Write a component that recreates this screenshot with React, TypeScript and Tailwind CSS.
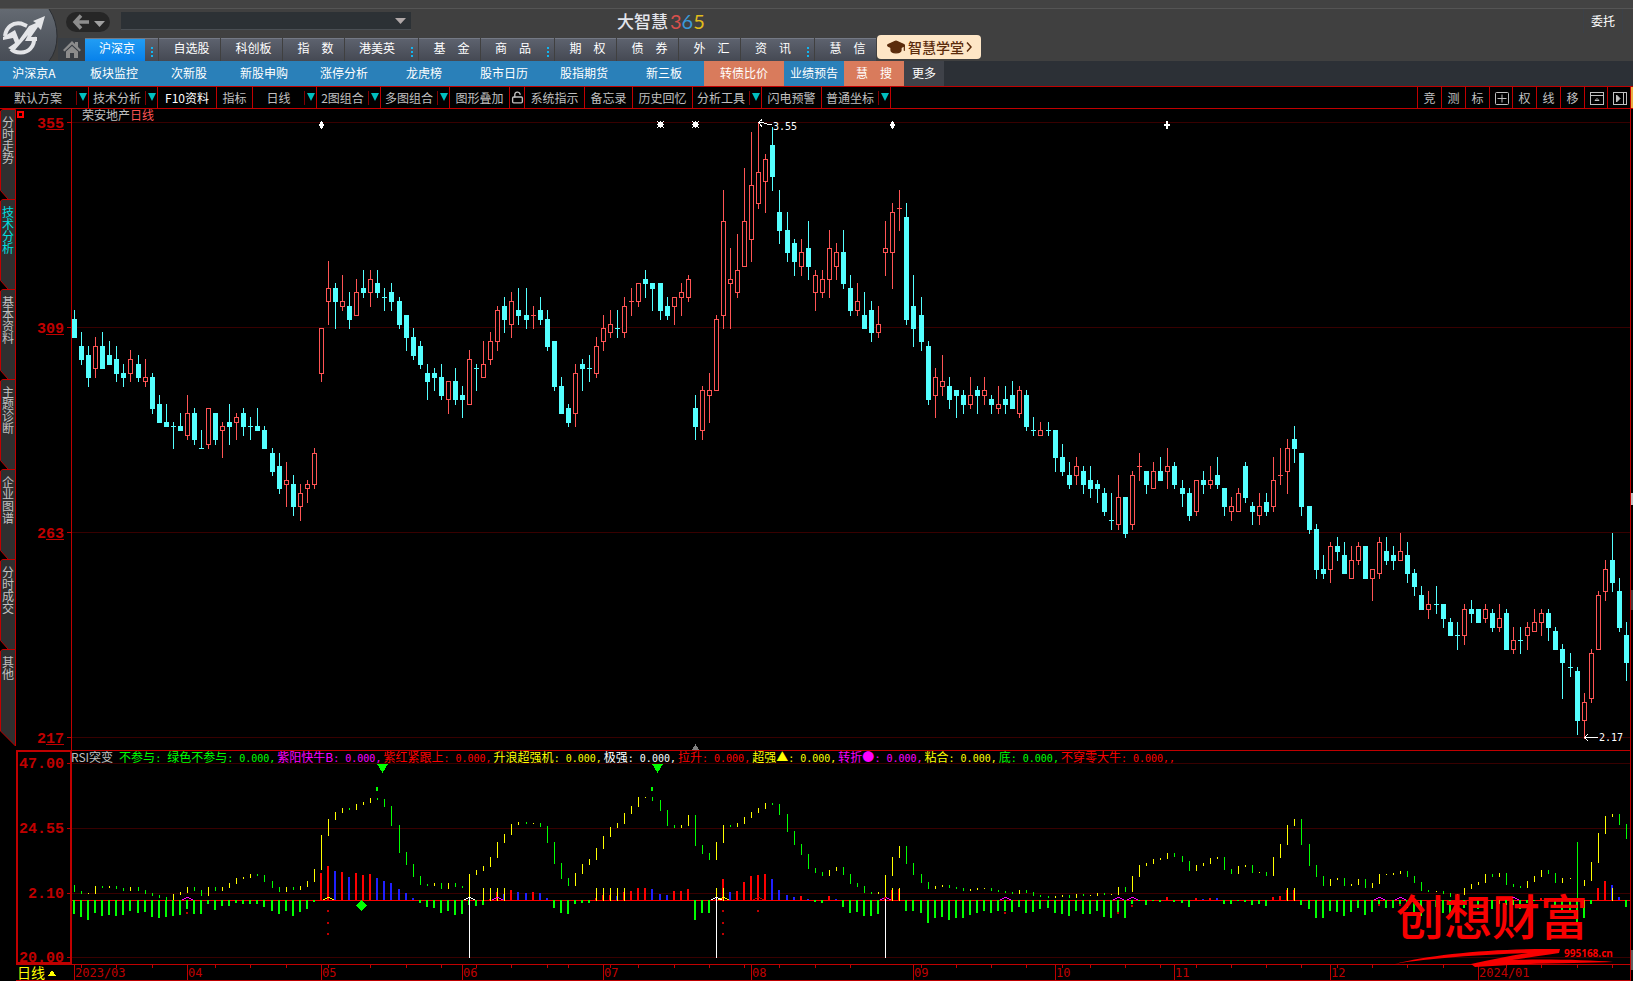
import { LockOpen, GraduationCap } from "lucide-react"

const CJK = "font-['Noto_Sans_CJK_SC',sans-serif]"

const mainTabs = [
  { name: "沪深京", more: true, active: true },
  { name: "自选股" },
  { name: "科创板" },
  { name: "指　数" },
  { name: "港美英", more: true },
  { name: "基　金" },
  { name: "商　品", more: true },
  { name: "期　权" },
  { name: "债　券" },
  { name: "外　汇" },
  { name: "资　讯", more: true },
  { name: "慧　信" },
]

const subTabs = [
  { name: "沪深京A", style: "w-[74px] pr-1.5" },
  { name: "板块监控", style: "w-20" },
  { name: "次新股", style: "w-[70px]" },
  { name: "新股申购", style: "w-20" },
  { name: "涨停分析", style: "w-20" },
  { name: "龙虎榜", style: "w-20" },
  { name: "股市日历", style: "w-20" },
  { name: "股指期货", style: "w-20" },
  { name: "新三板", style: "w-20" },
  { name: "转债比价", style: "w-20 bg-[#d97b5c]" },
  { name: "业绩预告", style: "w-[60px]" },
  { name: "慧　搜", style: "w-[60px] bg-[#d97b5c]" },
  { name: "更多", style: "w-10 bg-[#3f4249]" },
]

const tools = [
  { name: "默认方案", width: "w-[89px]", drop: true },
  { name: "技术分析", width: "w-[69px]", drop: true },
  { name: "F10资料", width: "w-[59px]", bright: true },
  { name: "指标", width: "w-9" },
  { name: "日线", width: "w-16", drop: true },
  { name: "2图组合", width: "w-16", drop: true },
  { name: "多图组合", width: "w-[69px]", drop: true },
  { name: "图形叠加", width: "w-[60px]" },
  { name: "lock", width: "w-[15px]" },
  { name: "系统指示", width: "w-[60px]" },
  { name: "备忘录", width: "w-12" },
  { name: "历史回忆", width: "w-[60px]" },
  { name: "分析工具", width: "w-[69px]", drop: true },
  { name: "闪电预警", width: "w-[60px]" },
  { name: "普通坐标", width: "w-[69px]", drop: true },
]

const rightTools = ["竞", "测", "标", "grid", "权", "线", "移", "collapse", "next"]

const sideTabs = ["分时走势", "技术分析", "基本资料", "主题诊断", "企业图谱", "分时成交", "其他"]

const legend = [
  { name: "不参与", color: "-mr-0.5 text-[#00ff00]", value: "" },
  { name: "绿色不参与", color: "text-[#00ff00]", value: "0.000," },
  { name: "紫阳快牛B", color: "text-[#ff00ff]", value: "0.000," },
  { name: "紫红紧跟上", color: "text-[#ff0000]", value: "0.000," },
  { name: "升浪超强机", color: "text-[#ffff00]", value: "0.000," },
  { name: "极强", color: "text-white", value: "0.000," },
  { name: "拉升", color: "text-[#ff0000]", value: "0.000," },
  { name: "超强▲", color: "text-[#ffff00]", value: "0.000," },
  { name: "转折●", color: "text-[#ff00ff]", value: "0.000," },
  { name: "粘合", color: "text-[#ffff00]", value: "0.000," },
  { name: "底", color: "text-[#00ff00]", value: "0.000," },
  { name: "不穿零大牛", color: "text-[#ff0000]", value: "0.000,," },
]

// high, body top, body bottom, low (in cents), 1 = up day
const candles = [
  [313,311,307,307,0],[308,305,302,301,0],[305,303,298,296,0],[307,305,300,298,1],[308,305,300,300,0],
  [306,303,301,301,0],[305,302,299,297,0],[301,299,298,296,0],[304,302,299,297,1],[303,301,298,297,0],
  [302,298,297,296,1],[299,298,291,290,0],[294,292,288,288,0],[292,288,287,287,0],[288,287,287,282,0],
  [290,287,286,286,0],[294,290,285,284,1],[291,290,284,283,0],[286,282,282,282,0],[291,291,283,282,1],
  [290,290,284,283,0],[288,287,286,280,1],[292,288,287,283,0],[290,289,288,284,1],[291,290,287,285,0],
  [289,287,287,284,0],[291,287,286,286,0],[287,286,282,282,0],[282,281,277,276,0],[281,278,273,272,0],
  [279,275,274,269,1],[276,274,269,267,0],[274,272,269,266,1],[275,274,273,270,1],[282,281,274,273,1],
  [309,309,299,297,1],[324,318,315,310,1],[319,318,315,309,0],[321,315,314,313,1],[317,314,311,309,0],
  [320,317,312,312,1],[322,318,317,316,0],[322,320,317,314,1],[322,319,317,316,0],[318,316,316,313,0],
  [319,317,315,313,0],[316,315,310,309,0],[312,312,307,304,0],[309,307,303,302,0],[306,305,301,300,0],
  [301,299,297,293,0],[300,299,298,295,0],[301,298,294,293,0],[297,297,293,290,1],[300,297,293,292,0],
  [296,294,293,289,0],[304,302,292,292,1],[301,300,300,295,0],[306,301,298,298,1],[308,306,302,301,1],
  [314,313,306,304,1],[316,314,311,308,0],[317,315,310,307,1],[318,313,312,310,0],[318,312,311,309,0],
  [314,312,312,309,1],[316,313,311,310,0],[313,311,305,304,0],[306,306,296,295,0],[298,296,290,290,0],
  [292,291,288,287,0],[301,299,290,287,1],[302,301,300,295,0],[303,300,300,297,0],[307,305,299,298,1],
  [312,309,306,304,1],[313,310,308,307,1],[313,309,309,307,0],[316,314,308,307,1],[318,315,315,312,1],
  [319,319,315,314,1],[322,320,319,316,0],[319,319,318,313,0],[319,319,313,311,0],[316,314,312,311,0],
  [316,316,314,310,1],[319,317,316,312,1],[321,320,316,315,1],[294,291,287,284,0],[296,295,286,284,1],
  [299,295,294,288,1],[312,311,295,295,1],[340,333,312,309,1],[327,320,319,309,1],[330,322,317,316,1],
  [345,333,323,323,1],[353,341,329,324,1],[355,344,337,336,1],[348,347,342,335,1],[354,350,343,340,0],
  [340,335,331,328,0],[335,331,326,324,0],[329,328,324,321,0],[329,326,323,321,1],[333,327,323,320,0],
  [322,321,317,313,1],[322,320,317,316,1],[331,327,320,316,1],[328,326,323,320,1],[331,326,319,318,0],
  [321,318,313,312,0],[319,315,313,312,1],[317,312,309,309,0],[315,313,308,306,0],[314,310,308,307,1],
  [333,327,326,321,1],[337,335,326,318,1],[340,336,336,331,1],[337,334,311,310,0],[321,314,309,305,0],
  [316,312,306,304,0],[306,305,293,292,0],[300,298,294,289,1],[303,297,296,294,1],[298,296,293,291,0],
  [295,295,294,289,0],[295,294,292,290,0],[298,294,292,291,1],[296,295,294,290,0],[298,295,294,292,1],
  [294,293,292,290,0],[296,292,291,290,1],[296,293,292,290,0],[297,294,291,291,0],[296,295,290,289,1],
  [295,294,287,286,0],[289,286,286,285,0],[288,286,285,285,1],[288,286,286,285,0],[286,286,280,277,0],
  [283,280,277,276,0],[279,276,274,273,0],[280,278,276,274,1],[278,277,274,272,0],[278,275,273,271,0],
  [275,274,273,270,0],[273,272,268,267,0],[272,266,266,264,0],[276,271,265,264,1],[271,271,263,262,0],
  [277,276,265,264,1],[281,278,278,275,1],[277,277,274,272,0],[279,277,273,273,1],[280,277,275,275,0],
  [282,278,277,273,1],[279,278,274,273,0],[275,273,272,269,0],[273,272,267,266,0],[275,275,268,267,1],
  [277,275,274,272,0],[278,275,274,273,1],[280,276,274,273,0],[273,273,269,267,0],[271,269,268,266,1],
  [273,272,268,268,1],[279,278,271,270,0],[270,269,268,265,0],[272,269,267,265,1],[272,270,268,267,0],
  [280,275,269,268,1],[282,276,276,274,1],[284,282,277,272,1],[287,284,282,279,0],[281,281,269,267,0],
  [269,269,264,263,0],[265,264,255,253,0],[258,255,254,253,0],[261,260,255,252,1],[262,260,259,257,0],
  [261,258,254,254,0],[260,257,253,253,1],[261,260,257,256,1],[260,260,253,253,0],[255,255,253,248,1],
  [262,261,254,253,1],[262,259,257,256,0],[260,258,257,255,0],[263,259,257,257,1],[261,258,254,252,0],
  [255,254,251,249,0],[251,249,246,246,0],[250,247,246,244,1],[251,247,247,245,0],[247,247,244,242,0],
  [244,243,240,240,0],[243,240,240,237,0],[247,246,240,238,1],[248,246,245,243,0],[246,246,243,243,0],
  [247,246,244,243,1],[246,245,242,241,0],[247,244,242,241,1],[246,245,237,237,0],[242,239,237,236,1],
  [242,239,239,236,0],[243,242,240,237,1],[246,243,241,241,1],[246,245,243,240,1],[246,245,242,239,0],
  [242,241,237,237,0],[238,237,234,226,0],[236,233,233,231,0],[233,232,221,218,0],[227,225,221,217,1],
  [237,236,226,225,1],[250,249,237,237,1],[257,255,250,248,1],[263,257,252,250,0],[253,250,242,241,0],
  [243,240,234,230,0],
]

const trend = [
  9,7,7,14,13,14,12,10,13,10,7,5,3,1,6,8,13,10,5,13,10,13,17,22,23,26,25,19,13,9,13,11,14,19,31,65,81,88,92,91,
  96,98,102,101,94,75,48,36,24,16,15,17,12,17,14,13,26,30,34,43,58,66,76,78,77,77,74,58,37,22,15,27,36,41,52,64,
  73,77,87,94,103,103,100,90,75,73,75,85,55,47,41,58,75,74,77,83,88,92,97,96,86,69,56,46,32,28,25,30,33,26,17,14,
  8,7,8,25,43,54,37,26,18,12,14,15,13,12,10,11,12,12,10,9,8,7,10,8,5,4,3,4,5,3,6,5,5,7,6,6,13,9,24,35,37,41,42,
  47,44,39,30,35,37,42,43,31,27,34,35,28,28,25,43,56,75,81,56,35,24,15,21,22,15,16,21,13,17,26,26,27,29,24,18,
  10,9,9,7,4,6,12,16,18,26,24,27,16,14,13,19,24,30,27,18,22,22,15,20,38,67,84,86,76,62,
]

const histogram = [
  -14,-17,-20,-13,-16,-15,-16,-15,-11,-13,-12,-17,-18,-17,-16,-15,-9,-14,-14,-4,-10,-6,-6,-3,-4,-4,-4,-7,-11,-14,
  -11,-16,-12,-9,-2,27,34,29,28,23,27,25,26,22,19,17,11,7,2,-3,-7,-8,-13,-11,-15,-14,-5,-6,-5,1,8,6,10,8,7,8,7,2,
  -8,-13,-14,-4,-3,-3,2,5,5,4,8,9,12,12,11,6,5,9,9,11,-20,-13,-13,1,21,8,9,18,24,25,26,21,10,5,3,4,1,-2,-3,4,1,
  -7,-13,-12,-16,-16,-14,2,10,11,-11,-11,-13,-23,-18,-17,-20,-18,-18,-15,-13,-11,-13,-11,-11,-12,-7,-13,-12,-9,
  -8,-13,-14,-16,-11,-14,-14,-11,-17,-18,-12,-18,-4,-1,-5,-1,-2,3,-2,-3,-7,2,1,2,2,-4,-4,-1,-2,-5,-4,-6,3,4,10,
  10,-5,-9,-18,-18,-11,-12,-16,-12,-8,-15,-12,-4,-8,-8,-4,-8,-12,-16,-8,-7,-13,-16,-10,-8,-10,-9,-6,-9,-4,-5,-5,
  -9,-3,-1,2,-2,-7,-10,-11,-23,-18,-4,12,19,15,3,-7,
]

const blueBars = [37,39,43,44,45,46,47,48,61,63,64,66,67,77,82,83,84,93,99,100,101,102,104,108,160,162,218,219]
const yellowMarks = [56,58,59,60,61,74,75,76,77,78,91,92,115,116,117,172,173,218]
const whiteLines = [56,91,115]
const hats = [
  [16,"#ff00ff"],[36,"#ffff00"],[56,"#ffffff"],[60,"#ff00ff"],[91,"#ffffff"],[92,"#ffff00"],[97,"#c00000"],[115,"#ff00ff"],
  [132,"#ff00ff"],[148,"#ff00ff"],[150,"#ff00ff"],[185,"#ff00ff"],[188,"#ff00ff"],[204,"#ff00ff"],
] as [number, string][]
const dots = [
  [16,912],[36,910],[36,922],[36,933],[92,910],[92,922],[92,933],[97,910],[132,912],[148,912],[150,905],[185,904],[188,904],[115,897],
]

const months = [
  [0,"2023/03"],[16,"04"],[35,"05"],[55,"06"],[75,"07"],[96,"08"],[119,"09"],[139,"10"],[156,"11"],[178,"12"],[199,"2024/01"],
] as [number, string][]
const weeks = [1,6,11,20,25,30,36,42,47,52,57,62,67,70,76,80,85,90,95,100,105,110,120,125,130,135,140,144,149,154,159,164,169,174,179,184,189,194,203,208,213,218]

const ZERO = 900
const barX = (i: number) => 74 + Math.floor(0.527 + i * 7.0543)
const priceY = (p: number) => 123 + Math.round((355 - p) * 4.4565)

function Logo() {
  return (
    <svg className="h-[52px] w-[58px] shrink-0" viewBox="0 0 58 52">
      <defs>
        <linearGradient id="logoBg" x1="0" y1="0" x2="0" y2="1">
          <stop offset="0" stopColor="#646a72" />
          <stop offset="1" stopColor="#474c55" />
        </linearGradient>
      </defs>
      <path d="M0 0H49Q57 12 57 27Q57 42 49 52H0Z" fill="url(#logoBg)" />
      <path d="M49 0Q57 12 57 27Q57 42 49 52" fill="none" stroke="#2b2e33" />
      <g fill="none" stroke="#e4e5e8" strokeWidth="4">
        <path d="M5 27C6 18 13 13 21 14.500L27 17" />
        <path d="M34 28C35 38 28 44 20 43.500C16 43.500 13 42 11 40" />
      </g>
      <path d="M3 28L15 21L19 31L29 17L36 14L33 12L45 7L41 21L38 18L31 28H37V32H25L28 26L14 42L8 39L15 34L13 29L3 31Z" fill="#e4e5e8" />
    </svg>
  )
}

function TitleBar() {
  return (
    <div className="flex h-[29px] items-start pl-2 pt-[3px]">
      <button aria-label="后退" className="flex h-5 w-11 items-center justify-center gap-1 rounded-full bg-[#262626]">
        <svg className="h-4 w-[18px]" viewBox="0 0 18 16">
          <path d="M17 8H3M9 1.500L3 8L9 14.500" fill="none" stroke="#8d8d8d" strokeWidth="3.5" />
        </svg>
        <svg className="mt-1 h-1.5 w-[11px]" viewBox="0 0 11 6"><path d="M0 0H11L5.500 6Z" fill="#a0a0a0" /></svg>
      </button>
      <div className="ml-[11px] flex h-[18px] w-[290px] items-center border-b border-[#4a4f54] bg-[#2c3135]">
        <input aria-label="搜索" className="h-full min-w-0 flex-1 bg-transparent px-2 text-xs text-white outline-none" />
        <button aria-label="展开" className="flex w-[22px] justify-center">
          <svg className="h-1.5 w-[11px]" viewBox="0 0 11 6"><path d="M0 0H11L5.500 6Z" fill="#b0a8a8" /></svg>
        </button>
      </div>
      <h1 className="ml-[206px] flex items-center text-[17px] leading-[18px] font-medium text-[#e3e5ec]">
        大智慧
        <span className="ml-0.5 font-['Lato',sans-serif] text-xl leading-[18px] font-normal">
          <span className="text-[#d9504c]">3</span><span className="text-[#3a9ad9]">6</span><span className="text-[#e0bd1b]">5</span>
        </span>
      </h1>
      <div className="ml-auto -mt-[3px] flex h-6 text-xs text-white">
        <button className="w-10 border-x border-[#3b4149]">委托</button>
        <span className="w-2.5" />
      </div>
    </div>
  )
}

function MainNav() {
  return (
    <nav className="flex h-[23px] text-xs text-white">
      <a href="#home" aria-label="首页" className="flex w-[27px] items-end justify-center bg-[#393e44] pb-[3px]">
        <svg className="h-[17px] w-[18px]" viewBox="0 0 18 17" fill="#8c8c8c">
          <path d="M9 0L12 3V1H15V6L18 9L16.500 10.500L9 3.500L1.500 10.500L0 9Z" />
          <path d="M9 5L15 10.500V17H11V12H7V17H3V10.500Z" />
        </svg>
      </a>
      {mainTabs.map((tab) => (
        <button
          key={tab.name}
          className={`mr-px flex border-t border-[#747985] bg-linear-to-b from-[#5d626e] to-[#454953] ${tab.more ? "w-[73px]" : "w-[61px]"}`}
        >
          <span className={`flex h-full flex-1 items-center justify-center pb-1 pl-1 ${tab.active ? "bg-linear-to-b from-[#219df4] to-[#0781ea]" : ""}`}>
            {tab.name}
          </span>
          {tab.more && (
            <span className="flex h-full w-[13px] flex-col items-center justify-center gap-0.5 pt-1">
              <i className="size-0.5 bg-[#12b5ef]" />
              <i className="size-0.5 bg-[#12b5ef]" />
              <i className="size-0.5 bg-[#12b5ef]" />
            </span>
          )}
        </button>
      ))}
      <button className="-mt-[3px] flex h-6 w-[104px] items-center justify-center rounded bg-[#fee6c6] pb-px text-sm font-medium text-[#5b2c0c]">
        <GraduationCap size={20} fill="#5b2c0c" strokeWidth={1.5} />
        <span className="ml-0.5">智慧学堂</span>
        <svg className="ml-0.5 h-2.5 w-1.5" viewBox="0 0 6 10"><path d="M1 0.500L5 5L1 9.500" fill="none" stroke="#5b2c0c" strokeWidth="1.500" /></svg>
      </button>
    </nav>
  )
}

function SubNav() {
  return (
    <nav className="flex h-[25px] bg-[#2c3036] text-xs text-white">
      {subTabs.map((tab) => (
        <a key={tab.name} href="#market" className={`flex items-center justify-center whitespace-nowrap bg-[#2a80b9] pb-0.5 ${tab.style}`}>
          {tab.name}
        </a>
      ))}
    </nav>
  )
}

function ToolIcon({ name }: { name: string }) {
  if (name === "lock") return <LockOpen size={13} strokeWidth={2.5} />
  return (
    <svg className="size-3.5" viewBox="0 0 14 14" fill="none" stroke="#c0c0c0">
      <rect x="0.5" y="1.5" width="13" height="12" rx={name === "grid" ? 1 : 0} />
      {name === "grid" && <path d="M7 3.500V11.500M2.500 7.500H11.500" />}
      {name === "collapse" && <path d="M1 4.500H13M5 9.500H9L7 7.500Z" />}
      {name === "next" && <path d="M10.500 2V13M3.500 4V11L7 7.500Z" fill="#c0c0c0" />}
    </svg>
  )
}

function ToolBar() {
  return (
    <div className="flex h-[23px] justify-between border-y border-[#c00000] bg-black text-xs text-[#c0c0c0]">
      <div className="flex">
        {tools.map((tool) => (
          <button key={tool.name} aria-label={tool.name} className={`flex shrink-0 border-r border-[#c00000] whitespace-nowrap ${tool.width} ${tool.bright ? "text-white" : ""}`}>
            <span className="flex h-full flex-1 items-center justify-center">
              {tool.name === "lock" ? <ToolIcon name="lock" /> : tool.name}
            </span>
            {tool.drop && (
              <span className="mt-1 flex h-3.5 w-3 border-l border-[#800000] pt-0.5 pl-0.5">
                <svg className="h-2 w-2" viewBox="0 0 8 8"><path d="M0 0H8L4 8Z" fill="#00c0c0" /></svg>
              </span>
            )}
          </button>
        ))}
      </div>
      <div className="flex">
        {rightTools.map((tool) => (
          <button
            key={tool}
            aria-label={tool}
            className={`flex items-center justify-center border-l border-[#c00000] ${tool.length > 1 ? "w-[23px] pl-px" : "w-6"}`}
          >
            {tool.length > 1 ? <ToolIcon name={tool} /> : tool}
          </button>
        ))}
        <span className="w-[3px] border-l border-[#c00000] bg-[#e8b040]" />
      </div>
    </div>
  )
}

function SideTabs() {
  return (
    <aside className="w-4 shrink-0 bg-black text-xs">
      {sideTabs.map((tab, i) => {
        const last = i === sideTabs.length - 1
        return (
          <button key={tab} className={`relative block w-4 ${last ? "h-[97px]" : "h-[90px]"} ${i === 1 ? "text-[#00e0e0]" : "text-[#c0c0c0]"}`}>
            <svg className="absolute inset-0 h-full w-4 overflow-visible" viewBox={last ? "0 0 16 97" : "0 0 16 90"} fill="#2f2f2f" stroke="#c00000">
              {last ? (
                <path d="M15.500 97L0.500 82V2L2.500 0.500H15.500Z" />
              ) : (
                <path d="M15.500 90.500H8.500L0.500 81.500V2L2.500 0.500H15.500Z" />
              )}
            </svg>
            <span className="absolute top-[7px] left-0.5 w-3 text-left leading-3 break-all">{tab}</span>
          </button>
        )
      })}
    </aside>
  )
}

function PriceChart() {
  return (
    <div className="relative">
      <svg className="block h-auto w-full" viewBox="16 109 1614 641" shapeRendering="crispEdges">
        <path d="M18 112H23V117H18Z" fill="none" stroke="#ff0000" strokeWidth="2" />
        {[355, 309, 263, 217].map((p, i) => (
          <g key={p}>
            <rect x="72" y={122 + i * 205} width="1558" height="1" fill="#380000" />
            <rect x="67" y={122 + i * 205} width="4" height="1" fill="#c00000" />
            <rect x="46" y={129 + i * 205} width="18" height="1" fill="#c00000" />
            <text x="37" y={128 + i * 205} fill="#c00000" className="font-['Liberation_Mono',monospace] text-[15px] font-bold">{p}</text>
          </g>
        ))}
        <rect x="71" y="109" width="1" height="641" fill="#c00000" />
        {candles.map(([high, top, bottom, low, up], i) => {
          const x = barX(i)
          const color = up ? "#ff5454" : "#54ffff"
          const y = priceY(top)
          const h = priceY(bottom) - y + 1
          return (
            <g key={i}>
              <rect x={x} y={priceY(high)} width="1" height={priceY(low) - priceY(high) + 1} fill={color} />
              <rect x={x - 2} y={y} width="5" height={h} fill={color} />
              {up === 1 && h > 2 && <rect x={x - 1} y={y + 1} width="3" height={h - 2} fill="#000" />}
            </g>
          )
        })}
        <g fill="#fff">
          {[321, 892].map((x) => <path key={x} d={`M${x} 121h1v1h1v2h1v2h-1v2h-1v1h-1v-1h-1v-2h-1v-2h1v-2h1Z`} />)}
          {[660, 695].map((x) => (
            <g key={x}>
              <rect x={x - 2} y="122" width="5" height="5" />
              <rect x={x} y="121" width="1" height="7" />
              <rect x={x - 3} y="124" width="7" height="1" />
              <rect x={x - 3} y="121" width="1" height="1" />
              <rect x={x + 3} y="121" width="1" height="1" />
              <rect x={x - 3} y="127" width="1" height="1" />
              <rect x={x + 3} y="127" width="1" height="1" />
            </g>
          ))}
          <path d="M1166 121h2v3h2v2h-2v3h-2v-3h-2v-2h2Z" />
        </g>
        <g fill="none" stroke="#fff">
          <path d="M762 119.500L758.500 122.500L762 126.500M759 122.500H763L768 124.500H772" />
          <path d="M1588 734L1584.500 737.500L1588 741M1585 737.500H1598" />
        </g>
        <g fill="#fff" className="font-['DejaVu_Sans_Mono',monospace] text-[10px]">
          <text x="773" y="130">3.55</text>
          <text x="1599" y="741">2.17</text>
        </g>
        <path d="M692 750L695.500 744L699 750Z" fill="#808080" />
      </svg>
      <h2 className="absolute top-0 left-[66px] text-xs leading-[11px] text-[#c0c0c0]">
        荣安地产<span className="text-[#ff5454]">日线</span>
      </h2>
    </div>
  )
}

function Watermark() {
  return (
    <g fill="#f80000">
      <text x="1396" y="935" className="font-['Noto_Sans_CJK_SC',sans-serif] text-[48px] font-medium">创想财富</text>
      <g shapeRendering="auto">
        <path d="M1395 964C1430 954 1500 948 1560 949L1559 953C1540 956 1525 958 1512 960C1545 959 1590 960 1613 962C1580 963 1530 963 1475 967L1471 964C1490 960 1510 956 1528 953C1480 955 1430 958 1395 964Z" />
      </g>
      <text x="1564" y="957" className="font-['Noto_Sans',sans-serif] text-[10px] font-bold">995168.cn</text>
    </g>
  )
}

function IndicatorChart() {
  return (
    <div className="relative">
      <svg className="block h-auto w-full" viewBox="16 750 1614 231" shapeRendering="crispEdges">
        <rect x="16" y="750" width="1615" height="1" fill="#c00000" />
        {["47.00", "24.55", "2.10", "20.00"].map((label, i) => {
          const y = [763, 828, 893, 957][i]
          return (
            <g key={label}>
              <rect x="72" y={y} width="1558" height="1" fill="#380000" />
              <rect x="67" y={y} width="4" height="1" fill="#c00000" />
              <text x="64" y={y + 5} textAnchor="end" fill="#c00000" className="font-['Liberation_Mono',monospace] text-[15px] font-bold">{label}</text>
            </g>
          )
        })}
        <rect x="17" y="751" width="54" height="212" fill="none" stroke="#c00000" strokeWidth="2" />
        <rect x="72" y={ZERO} width="1558" height="1" fill="#ff0000" />
        {histogram.map((v, i) => (
          <rect
            key={i}
            x={barX(i) - 1}
            y={v > 0 ? ZERO - v : ZERO}
            width="2"
            height={Math.abs(v)}
            fill={v < 0 ? "#00ff00" : blueBars.includes(i) ? "#2020ff" : "#ff0000"}
          />
        ))}
        {trend.map((v, i) => {
          if (i === 213) return null
          const prev = i ? trend[i - 1] : 15
          return (
            <rect
              key={i}
              x={barX(i)}
              y={ZERO - Math.max(v, prev)}
              width="1"
              height={Math.abs(v - prev) + 1}
              fill={v < prev ? "#00ff00" : "#ffff00"}
            />
          )
        })}
        <rect x={barX(213)} y="842" width="1" height="82" fill="#00ff00" />
        {yellowMarks.map((i) => <rect key={i} x={barX(i)} y="888" width="1" height="13" fill="#ffff00" />)}
        {whiteLines.map((i) => <rect key={i} x={barX(i)} y="898" width="1" height="60" fill="#fff" />)}
        {hats.map(([i, color]) => (
          <path key={i} d={`M${barX(i) - 5} 899.500h2M${barX(i) - 3} 898.500h2M${barX(i) - 1} 897.500h3M${barX(i) + 2} 898.500h2M${barX(i) + 4} 899.500h2`} stroke={color} />
        ))}
        {dots.map(([i, y]) => <rect key={`${i}-${y}`} x={barX(i) - 1} y={y} width="2" height="2" fill="#c00000" />)}
        <g fill="#00ff00">
          <path d="M377 764H388L382.500 773Z" />
          <path d="M652 764H663L657.500 773Z" />
          <path d="M361.500 900L367 905.500L361.500 911L356 905.500Z" />
          <rect x="376" y="787" width="2" height="4" />
          <rect x="651" y="787" width="2" height="4" />
        </g>
        <rect x="16" y="964" width="1615" height="1" fill="#c00000" />
        <rect x="16" y="980" width="1615" height="1" fill="#c00000" />
        {weeks.map((i) => <rect key={i} x={barX(i)} y="965" width="1" height="3" fill="#c00000" />)}
        {months.map(([i, label]) => (
          <g key={label} fill="#c00000">
            <rect x={barX(i)} y="964" width="1" height="16" />
            <text x={barX(i) + 1} y="977" className="font-['DejaVu_Sans_Mono',monospace] text-xs">{label}</text>
          </g>
        ))}
        <text x="17" y="978" fill="#ffff00" className="font-['Noto_Sans_CJK_SC',sans-serif] text-[14px]">日线</text>
        <path d="M48 976L52 970L56 976Z" fill="#ffff00" />
        <Watermark />
      </svg>
      <p className="absolute top-0 left-[55px] flex gap-0.5 text-xs leading-[14px] whitespace-pre">
        <span className="mr-1 text-[#c0c0c0]">RSI突变</span>
        {legend.map((item) => (
          <span key={item.name} className={item.color}>
            {item.name}<span className="font-['DejaVu_Sans_Mono',monospace] text-[10px]">{`: ${item.value}`}</span>
          </span>
        ))}
      </p>
    </div>
  )
}

export default function App() {
  return (
    <div className={`min-h-screen overflow-hidden bg-black ${CJK}`}>
      <header className="bg-[#404040]">
        <div className="h-2 bg-[#434343]" />
        <div className="flex border-t border-[#555555]">
          <Logo />
          <div className="min-w-0 flex-1">
            <TitleBar />
            <MainNav />
          </div>
        </div>
        <SubNav />
        <ToolBar />
      </header>
      <main className="flex">
        <SideTabs />
        <div className="min-w-0 flex-1 border-r border-[#c00000]">
          <PriceChart />
          <IndicatorChart />
        </div>
        <div className="flex w-0.5 flex-col bg-black">
          <span className="mt-[384px] h-3 bg-[#c0c0c0]" />
          <span className="mt-[85px] h-5 bg-[#404040]" />
          <span className="mt-[340px] h-5 bg-[#606060]" />
        </div>
      </main>
    </div>
  )
}
